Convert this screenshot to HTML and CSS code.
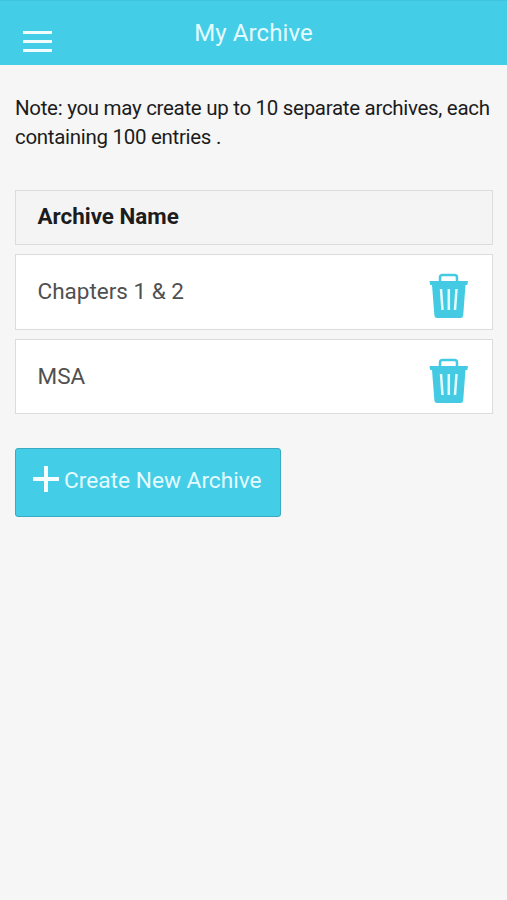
FILE: index.html
```html
<!DOCTYPE html>
<html lang="en">
<head>
  <meta charset="UTF-8">
  <meta name="viewport" content="width=device-width, initial-scale=1.0">
  <title>My Archive</title>
  <link rel="stylesheet" href="styles.css">
</head>
<body>
  <header class="header">
    <button class="menu-btn" aria-label="Menu">
      <span></span>
      <span></span>
      <span></span>
    </button>
    <h1>My Archive</h1>
  </header>

  <main class="content">
    <p class="note">Note: you may create up to 10 separate archives, each containing 100 entries .</p>

    <div class="archive-head">Archive Name</div>
    <ul class="archive-list">
      <li class="archive-item">
        <span class="archive-name">Chapters 1 &amp; 2</span>
        <button class="delete-btn" aria-label="Delete">
          <svg width="40" height="46" viewBox="0 0 40 46">
            <path class="handle" d="M11 9V4.500Q11 2 13.500 2H25.500Q28 2 28 4.500V9"/>
            <path class="can" d="M.5 8H39L38.300 12H36.500L34.200 42.500Q34 45 31.500 45H8Q5.600 45 5.400 42.500L3 12H1.200Z"/>
            <path class="slot" d="M12 16L13.500 37M19.800 16V37M27.500 16L26 37"/>
          </svg>
        </button>
      </li>
      <li class="archive-item">
        <span class="archive-name">MSA</span>
        <button class="delete-btn" aria-label="Delete">
          <svg width="40" height="46" viewBox="0 0 40 46">
            <path class="handle" d="M11 9V4.500Q11 2 13.500 2H25.500Q28 2 28 4.500V9"/>
            <path class="can" d="M.5 8H39L38.300 12H36.500L34.200 42.500Q34 45 31.500 45H8Q5.600 45 5.400 42.500L3 12H1.200Z"/>
            <path class="slot" d="M12 16L13.500 37M19.800 16V37M27.500 16L26 37"/>
          </svg>
        </button>
      </li>
    </ul>

    <button class="create-btn">
      <svg width="26" height="26" viewBox="0 0 26 26">
        <path d="M0 13H26M13 0V26"/>
      </svg>
      <span>Create New Archive</span>
    </button>
  </main>
</body>
</html>
```

FILE: styles.css
```css
* {
  box-sizing: border-box;
}
body {
  margin: 0;
  min-height: 100vh;
  background-color: #f6f6f6;
  font-family: Roboto, sans-serif;
  color: #1c1c1c;
}
button {
  padding: 0;
  border: none;
  background: none;
  font-family: inherit;
  cursor: pointer;
}
svg {
  display: block;
}
.header {
  display: grid;
  grid-template-columns: 52px 1fr 52px;
  height: 65px;
  background-color: #44cde7;
  border-top: 1px solid #3fc3de;
}
.header h1 {
  margin: 17px 0 0;
  text-align: center;
  font-size: 24px;
  font-weight: 400;
  line-height: 31px;
  letter-spacing: 0.1px;
  color: #e4fbff;
}
.menu-btn {
  display: flex;
  flex-direction: column;
  align-items: flex-end;
  gap: 6px;
  padding-top: 30px;
}
.menu-btn span {
  width: 29px;
  height: 3px;
  background-color: #effdff;
}
.content {
  padding: 29px 14px 0 15px;
}
.note {
  margin: 0 0 38px;
  font-size: 20.5px;
  line-height: 29px;
  letter-spacing: -0.3px;
}
.archive-head {
  height: 55px;
  padding: 0 21.5px;
  border: 1px solid #dcdcdc;
  background-color: #f4f4f4;
  font-size: 22.4px;
  font-weight: 700;
  line-height: 51px;
}
.archive-list {
  margin: 9px 0 0;
  padding: 0;
  list-style: none;
}
.archive-item {
  display: flex;
  justify-content: space-between;
  height: 75.5px;
  margin-bottom: 9px;
  padding: 0 23px 0 21.5px;
  border: 1px solid #dcdcdc;
  background-color: #fff;
  color: #505050;
}
.archive-name {
  font-size: 22.5px;
  line-height: 73px;
}
.delete-btn {
  align-self: flex-start;
  margin-top: 18px;
}
.handle {
  fill: none;
  stroke: #44cbe3;
  stroke-width: 2.5;
}
.can {
  fill: #44cbe3;
}
.slot {
  fill: none;
  stroke: #e2fbff;
  stroke-width: 2.5;
}
.create-btn {
  display: flex;
  gap: 5px;
  width: 266px;
  height: 69px;
  margin-top: 34px;
  padding: 17px 0 0 17px;
  border: 1px solid #38abc2;
  border-radius: 3px;
  background-color: #44cde7;
  color: #e4fbff;
  font-size: 22.7px;
  line-height: 29px;
  white-space: nowrap;
}
.create-btn path {
  stroke: #f6feff;
  stroke-width: 4;
}
```
